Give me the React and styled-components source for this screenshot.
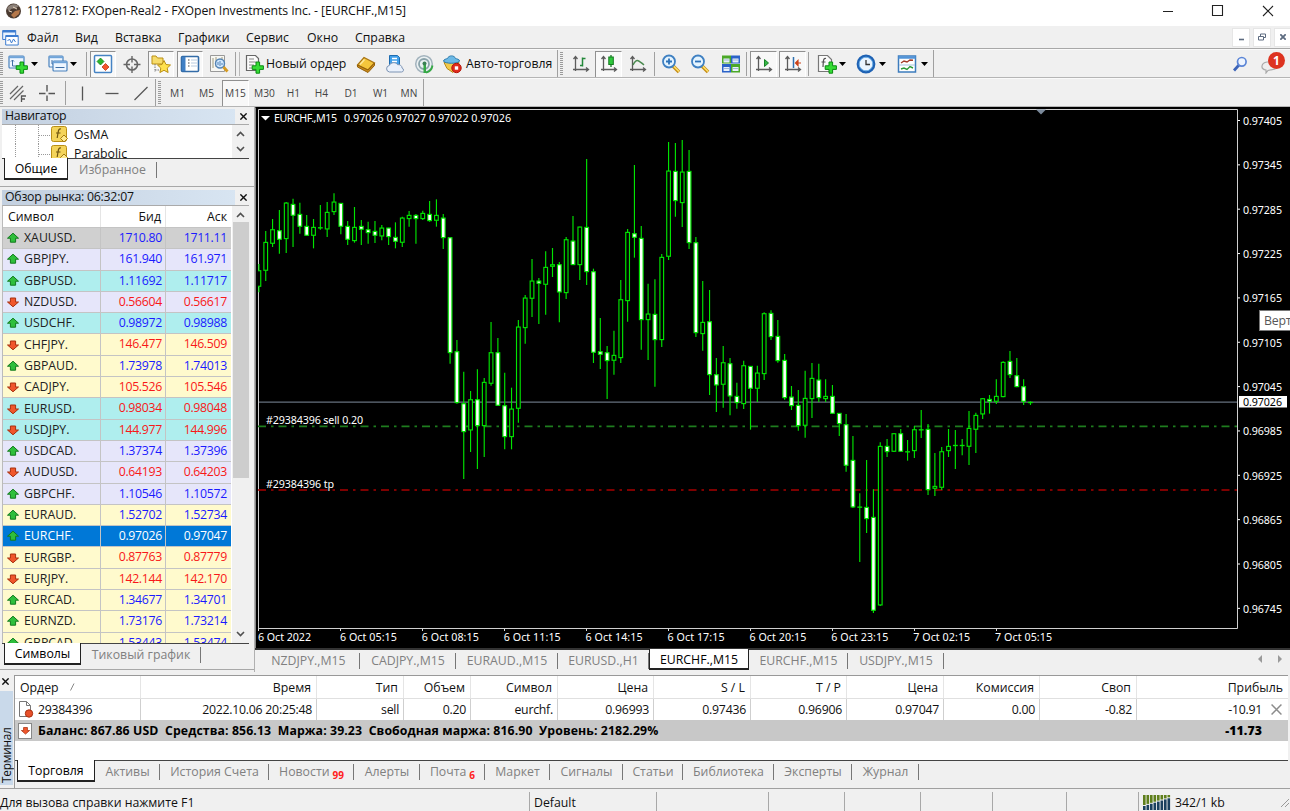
import styled, { createGlobalStyle, css } from "styled-components";

const GlobalStyle = createGlobalStyle`
    * {
        box-sizing: border-box;
    }
    body {
        margin: 0;
        overflow: hidden;
        background: #f0f0f0;
        font-family: "Open Sans", "Noto Sans", sans-serif;
        font-size: 12.3px;
        color: #111;
    }
    svg {
        display: block;
        flex: none;
    }
`;

/* ---------- data ---------- */

const MENU = [
    ["Файл", 48],
    ["Вид", 40],
    ["Вставка", 63],
    ["Графики", 68],
    ["Сервис", 61],
    ["Окно", 48],
    ["Справка", 60],
];

const COLORS = {
    grey: "#d0d0d0",
    lavender: "#e6e6fa",
    aqua: "#afeeee",
    cream: "#fffacd",
    selected: "#0078d7",
};

const SYMBOLS = [
    ["XAUUSD.", "1710.80", "1711.11", "up", "grey"],
    ["GBPJPY.", "161.940", "161.971", "up", "lavender"],
    ["GBPUSD.", "1.11692", "1.11717", "up", "aqua"],
    ["NZDUSD.", "0.56604", "0.56617", "down", "lavender"],
    ["USDCHF.", "0.98972", "0.98988", "up", "aqua"],
    ["CHFJPY.", "146.477", "146.509", "down", "cream"],
    ["GBPAUD.", "1.73978", "1.74013", "up", "cream"],
    ["CADJPY.", "105.526", "105.546", "down", "cream"],
    ["EURUSD.", "0.98034", "0.98048", "down", "aqua"],
    ["USDJPY.", "144.977", "144.996", "down", "aqua"],
    ["USDCAD.", "1.37374", "1.37396", "up", "lavender"],
    ["AUDUSD.", "0.64193", "0.64203", "down", "lavender"],
    ["GBPCHF.", "1.10546", "1.10572", "up", "lavender"],
    ["EURAUD.", "1.52702", "1.52734", "up", "cream"],
    ["EURCHF.", "0.97026", "0.97047", "up", "selected"],
    ["EURGBP.", "0.87763", "0.87779", "down", "cream"],
    ["EURJPY.", "142.144", "142.170", "down", "cream"],
    ["EURCAD.", "1.34677", "1.34701", "up", "cream"],
    ["EURNZD.", "1.73176", "1.73214", "up", "cream"],
    ["GBPCAD.", "1.53443", "1.53474", "up", "cream"],
];

const PRICES = [
    "0.97405", "0.97345", "0.97285", "0.97225", "0.97165", "0.97105",
    "0.97045", "0.96985", "0.96925", "0.96865", "0.96805", "0.96745",
];

const TIMES = [
    "6 Oct 2022", "6 Oct 05:15", "6 Oct 08:15", "6 Oct 11:15", "6 Oct 14:15",
    "6 Oct 17:15", "6 Oct 20:15", "6 Oct 23:15", "7 Oct 02:15", "7 Oct 05:15",
];

// high, body top, body bottom, low (thirds of a pixel under base), f = falling bar
const SEGMENTS = [
    {
        base: 105,
        bars: `477,496,545,562 378,411,497,528 342,373,416,426 315,376,404,446,f 291,293,402,444
            281,297,332,426,f 293,327,365,386,f 330,363,392,392,f 342,366,392,430 300,367,369,374
            291,321,373,396 265,290,321,330 294,294,365,388,f 348,363,404,420,f 306,366,408,413
            345,363,374,420,f 350,373,384,416,f 348,378,392,414,f 360,368,394,406 368,368,396,420,f
            352,396,410,430,f 335,338,413,426 318,330,342,365 327,330,342,416,f 317,324,342,345
            288,327,348,350,f 283,330,347,365 327,338,399,432,f 397,397,744,776,f 705,739,894,896,f
            800,895,981,1122,f 858,883,976,1041 793,883,963,1092,f 819,831,963,1056 651,742,836,842
            699,742,902,902,f`,
    },
    {
        base: 130,
        bars: `728,826,921,958,f 773,836,921,958 570,590,836,878 495,503,594,641 387,452,506,561
            444,452,461,582,f 364,411,464,554 354,403,410,441 396,403,487,577,f 321,328,489,507
            258,332,405,405,f 290,290,405,450 87,291,426,465,f 416,424,668,699,f 564,664,674,717,f
            648,667,693,807,f 602,675,692,734 450,508,684,699 297,306,513,575 105,310,323,383,f
            288,324,570,659,f 461,551,570,690 448,552,630,770,f 372,381,630,651 36,122,380,390
            39,123,213,260,f 30,125,219,291 60,123,339,357,f 321,337,609,621,f 453,576,612,662
            480,574,735,795,f 684,733,766,846,f 648,697,764,833 684,700,799,856,f 758,798,819,836,f`,
    },
    {
        base: 300,
        bars: `182,196,312,327 198,198,266,389,f 197,218,266,306 37,40,222,240 31,39,111,120,f
            60,108,183,188,f 162,180,294,299,f 258,290,318,330,f 270,315,378,392,f 212,294,377,413
            189,234,297,354 191,239,294,306,f 238,288,297,306 255,288,341,341,f 339,339,372,408,f
            342,373,497,515,f 408,480,622,624,f 580,620,622,786 480,621,657,699,f 568,651,932,939,f
            427,438,916,918 417,438,456,471,f 399,400,455,456 387,400,455,456,f 420,454,456,482
            378,388,453,474 330,388,391,414 372,387,570,585,f 459,558,566,588 441,454,563,570
            387,438,453,471 390,435,437,507 417,435,437,466 333,384,440,495 338,345,389,459
            294,295,343,357 285,297,305,341,f 238,288,305,312 184,186,291,292 153,183,225,234,f
            174,226,261,262,f 238,259,305,315,f 304,306,307,315`,
    },
];

const BARS = SEGMENTS.flatMap(({ base, bars }) =>
    bars.trim().split(/\s+/).map((bar) => {
        const [high, top, bottom, low, falling] = bar.split(",");
        const y = (value) => base + Number(value) / 3;
        return { high: y(high), top: y(top), bottom: y(bottom), low: y(low), falling };
    })
);

const CHART_TABS = [
    ["NZDJPY.,M15", 103],
    ["CADJPY.,M15", 96],
    ["EURAUD.,M15", 102],
    ["EURUSD.,H1", 91],
    ["EURCHF.,M15", 100, true],
    ["EURCHF.,M15", 99],
    ["USDJPY.,M15", 96],
];

const TERMINAL_TABS = [
    ["Торговля", 78, "", true],
    ["Активы", 65],
    ["История Счета", 109],
    ["Новости", 85, "99"],
    ["Алерты", 66],
    ["Почта", 65, "6"],
    ["Маркет", 65],
    ["Сигналы", 73],
    ["Статьи", 60],
    ["Библиотека", 91],
    ["Эксперты", 78],
    ["Журнал", 67],
];

// title, value, column width
const ORDER = [
    ["Ордер", "29384396", 126],
    ["Время", "2022.10.06 20:25:48", 176],
    ["Тип", "sell", 87],
    ["Объем", "0.20", 67],
    ["Символ", "eurchf.", 87],
    ["Цена", "0.96993", 96],
    ["S / L", "0.97436", 97],
    ["T / P", "0.96906", 96],
    ["Цена", "0.97047", 97],
    ["Комиссия", "0.00", 96],
    ["Своп", "-0.82", 97],
    ["Прибыль", "-10.91", 151],
];

/* ---------- icons ---------- */

const Icon = ({ size = 20, children }) => (
    <svg width={size} height={size} viewBox="0 0 20 20" fill="none">{children}</svg>
);

const Plus = ({ x = 9, y = 8 }) => (
    <path
        d={`M${x + 4} ${y}h3.6v3.8h3.8v3.6h-3.8v3.8h-3.6v-3.8h-3.8v-3.6h3.8z`}
        fill="#35dc35" stroke="#0b8a12" strokeWidth="1"
    />
);

const Axes = () => (
    <path
        d="M4.5 3v14M2 15.5h15M2.5 5l2-2.5 2 2.5M15 13.5l2.5 2-2.5 2"
        stroke="#5c5c5c" strokeWidth="1.3"
    />
);

const Window = ({ x = 2, y = 3, w = 15, h = 12 }) => (
    <>
        <rect x={x} y={y} width={w} height={h} rx="1" fill="#eef6ff" stroke="#4a82bd" strokeWidth="1.2" />
        <path d={`M${x} ${y + 1.2}h${w}`} stroke="#6fa4d9" strokeWidth="2" />
    </>
);

const Lens = ({ plus }) => (
    <Icon>
        <path d="M12 12l6 6" stroke="#c58d16" strokeWidth="3.6" />
        <path d="M12.5 12l5.5 5.5" stroke="#ffe169" strokeWidth="1.6" />
        <circle cx="8" cy="7.5" r="6" fill="#e4f4ff" stroke="#3f80c2" strokeWidth="1.8" />
        <path d={plus ? "M5 7.5h6M8 4.5v6" : "M5 7.5h6"} stroke="#2d72b8" strokeWidth="1.8" />
    </Icon>
);

const ICONS = {
    newChart: (
        <Icon>
            <Window x={1} y={2} />
            <path d="M4.5 6v6h6M3 7.5L4.5 6 6 7.500" stroke="#3f6fa5" />
            <Plus x={8} />
        </Icon>
    ),
    profiles: (
        <Icon>
            <Window x={1} y={2} w={14} h={11} />
            <path d="M4 6v4h8" stroke="#3f6fa5" />
            <Window x={5} y={7} w={14} h={10} />
            <path d="M7.5 13.5h9" stroke="#3f6fa5" />
        </Icon>
    ),
    market: (
        <Icon>
            <rect x="1.5" y="1.5" width="17" height="17" rx="1" fill="#fff" stroke="#4583c4" strokeWidth="1.5" />
            <path d="M7.5 4l3.5 3.5L7.5 11 4 7.5z" fill="#2db52d" stroke="#0b7d12" strokeWidth=".7" />
            <path d="M12.500 9.500L16 13l-3.5 3.500L9 13z" fill="#f3562a" stroke="#b12a08" strokeWidth=".7" />
        </Icon>
    ),
    target: (
        <Icon>
            <circle cx="10" cy="10.5" r="5.500" stroke="#666" strokeWidth="1.6" />
            <path d="M10 2v6.500M10 12.500V19M1.500 10.500H8M12 10.500h6.500" stroke="#666" strokeWidth="1.4" />
        </Icon>
    ),
    navigator: (
        <Icon>
            <path d="M1 2h4l1.500 2H12v6H1z" fill="#f7dc6b" stroke="#b98f15" />
            <path d="M4 10v8M4 16h5" stroke="#777" strokeDasharray="1.5 1" />
            <path d="M13 6.5l2 4 4.500.5-3.300 3.100.9 4.400-4.100-2.200-4.100 2.200.9-4.400-3.300-3.100 4.500-.5z" fill="#ffe14d" stroke="#b98f15" />
        </Icon>
    ),
    terminal: (
        <Icon>
            <rect x="1.5" y="2.5" width="17" height="15" rx="1" fill="#fff" stroke="#336ca8" strokeWidth="1.600" />
            <path d="M2 3h3.500v14H2z" fill="#3f7fc4" />
            <path d="M8 6h1.500M8 9h1.500M8 12h1.500" stroke="#444" strokeWidth="1.200" />
            <path d="M11 6h6M11 9h6M11 12h6" stroke="#b8cbe0" />
        </Icon>
    ),
    tester: (
        <Icon>
            <path d="M1.5 1.5h14v16h-14z" fill="#f7f7f3" stroke="#999" />
            <path d="M4 4v10M7 3v10M13 3v5" stroke="#a09c80" />
            <circle cx="11" cy="9.500" r="4.500" fill="#cfe7ff" stroke="#5484b4" strokeWidth="1.400" />
            <path d="M9 11V8M11 12V7M13 11V9" stroke="#5484b4" />
            <path d="M14.500 13l4 4.500" stroke="#d59a20" strokeWidth="2.800" />
        </Icon>
    ),
    order: (
        <Icon>
            <path d="M2.5 1.5h9l3 3v12h-12z" fill="#fafafa" stroke="#666" strokeWidth="1.2" />
            <path d="M5 5h5M5 8h7M5 11h5M5 14h3" stroke="#888" strokeWidth="1.2" />
            <Plus x={8} />
        </Icon>
    ),
    book: (
        <Icon>
            <path d="M1.5 11L8 3.500l10.500 5.500-6.500 7z" fill="#f5c63c" stroke="#a97412" strokeWidth="1.2" />
            <path d="M1.5 11v2L12 18.500l6.500-7V9L12 16z" fill="#c98a1c" stroke="#946108" />
            <path d="M4 10.500L8.500 5.500" stroke="#ffe99a" strokeWidth="1.5" />
        </Icon>
    ),
    cloud: (
        <Icon>
            <path d="M4.500 1.500h8l2 2v9h-10z" fill="#42a0ea" stroke="#1e6cb0" />
            <path d="M7 4.500h5M7 7.500h5" stroke="#fff" strokeWidth="1.5" />
            <path d="M4.5 18a3.300 3.300 0 01-.3-6.500 5 5 0 018.500-.8 3.600 3.600 0 014.400 3.400A2 2 0 0116.500 18z" fill="#eaf1fb" stroke="#7c93b3" />
        </Icon>
    ),
    signal: (
        <Icon>
            <circle cx="10" cy="10" r="8.300" fill="#eaf0f2" stroke="#a3b3bd" strokeWidth="1.500" />
            <circle cx="10" cy="10" r="5" stroke="#8ba3ab" strokeWidth="1.800" />
            <path d="M9.500 10h2.500v9H9.500z" fill="#35a945" />
            <circle cx="10.500" cy="9.500" r="2" fill="#3b7f54" />
            <path d="M12 18.500a8.500 8.500 0 006.500-7" stroke="#35a945" strokeWidth="1.800" />
        </Icon>
    ),
    auto: (
        <Icon>
            <path d="M2 8.500l3 6 6 4 5-5 1-5z" fill="#f3c94a" stroke="#b88915" />
            <path d="M1.500 7c0-1.500 3-2.200 4-2.500 1-3.500 7-3.500 8 0 1 .3 4.500 1 4 2.500-1 3-15 3-16 0z" fill="#6bb9e6" stroke="#2d7cae" />
            <circle cx="14.500" cy="14" r="4.700" fill="#e02b1d" stroke="#b31409" />
            <path d="M12.800 12.300h3.400v3.400h-3.400z" fill="#fff" />
        </Icon>
    ),
    bars: (
        <Icon><Axes /><path d="M11.500 3.500v9M11.500 4.500h3M9 11.500h2.500" stroke="#23883a" strokeWidth="1.5" /></Icon>
    ),
    candles: (
        <Icon>
            <Axes />
            <path d="M12 1v12" stroke="#157a20" strokeWidth="1.3" />
            <rect x="9.800" y="3" width="4.500" height="7.500" fill="#2fc93c" stroke="#157a20" />
        </Icon>
    ),
    line: (
        <Icon><Axes /><path d="M5 11c4-8 6-4 11 0" stroke="#4a8a4f" strokeWidth="1.5" /></Icon>
    ),
    zoomIn: <Lens plus />,
    zoomOut: <Lens />,
    tile: (
        <Icon>
            <path d="M1 1.500h9v8H1zM10 10h9v8.500h-9z" fill="#4ba827" />
            <path d="M10 1.500h9v8h-9zM1 10h9v8.500H1z" fill="#2b62c8" />
            <path d="M2.500 4.500h6v4h-6zM11.500 4.500h6v4h-6zM2.500 13h6v4h-6zM11.500 13h6v4h-6z" fill="#e8f1fb" />
            <path d="M3 6h5M12 6h5M3 14.500h5M12 14.500h5" stroke="#9eb7d6" />
        </Icon>
    ),
    scroll: (
        <Icon><Axes /><path d="M10.500 5.500l4 3.500-4 3.500z" fill="#35b845" stroke="#178226" /></Icon>
    ),
    shift: (
        <Icon>
            <Axes />
            <path d="M10.500 3v11" stroke="#3071b0" strokeWidth="1.500" />
            <path d="M18 9h-5M15 6.500L12.500 9l2.500 2.500z" stroke="#cb4319" fill="#cb4319" strokeWidth="1.200" />
        </Icon>
    ),
    indicators: (
        <Icon>
            <path d="M1.5 1.5h9l4 4v12h-13z" fill="#fafafa" stroke="#777" strokeWidth="1.2" />
            <path d="M9 4.500c-2-.5-2.500 1-2.700 3.500L6 13M4.500 8h4" stroke="#555" strokeWidth="1.2" />
            <Plus x={8} />
        </Icon>
    ),
    clock: (
        <Icon>
            <circle cx="10" cy="10" r="8" fill="#e9f4ff" stroke="#1e62b4" strokeWidth="2.800" />
            <circle cx="10" cy="10" r="6.800" stroke="#74b5ec" />
            <path d="M10 6v4.500h4" stroke="#333" strokeWidth="1.300" />
        </Icon>
    ),
    template: (
        <Icon>
            <rect x="1.5" y="2" width="17" height="16" fill="#fff" stroke="#3d7cbd" strokeWidth="1.5" />
            <path d="M1.500 3.500h17" stroke="#5294d8" strokeWidth="2.500" />
            <path d="M2 11h16" stroke="#a8c4df" />
            <path d="M4 9l3-2 3 1 3-2 3 .3" stroke="#a33b27" strokeWidth="1.400" />
            <path d="M4 15l3-1 3 1.500 3-3 3 1.500" stroke="#2d9a3a" strokeWidth="1.400" />
        </Icon>
    ),
    channel: (
        <Icon>
            <path d="M2 11l8-8M2 16L15 3M6 17l9.500-9.500" stroke="#666" strokeWidth="1.200" />
            <path d="M13.500 19v-6H18M13.500 16h3.500" stroke="#555" strokeWidth="1.300" />
        </Icon>
    ),
    cross: (
        <Icon><path d="M10 2v6.500M10 12.500V18M2 10.500h6.500M11.500 10.500H18" stroke="#555" strokeWidth="1.400" /></Icon>
    ),
    vline: (
        <Icon><path d="M10.500 3.500v14" stroke="#555" strokeWidth="1.300" /></Icon>
    ),
    hline: (
        <Icon><path d="M3.500 10.500h13" stroke="#555" strokeWidth="1.300" /></Icon>
    ),
    trend: (
        <Icon><path d="M3.500 17L16.500 4" stroke="#555" strokeWidth="1.300" /></Icon>
    ),
};

const Caret = () => (
    <svg width="7" height="4" viewBox="0 0 7 4"><path d="M0 0h7L3.500 4z" fill="#000" /></svg>
);

const Cross = ({ size = 7, color = "#111", width = 1.4 }) => (
    <svg width={size} height={size} viewBox="0 0 10 10">
        <path d="M.5.500l9 9M9.500.500l-9 9" stroke={color} strokeWidth={width * 10 / size} />
    </svg>
);

const Chevron = ({ down }) => (
    <svg width="9" height="6" viewBox="0 0 9 6" fill="none">
        <path d={down ? "M1 1l3.500 3.500L8 1" : "M1 5l3.500-3.500L8 5"} stroke="#505050" strokeWidth="1.600" />
    </svg>
);

const Arrow = ({ dir, size = 12 }) => (
    <svg width={size} height={size} viewBox="0 0 12 12">
        <path
            d={dir === "up" ? "M6 1.200l5.500 5H8.600v4H3.400v-4H.5z" : "M6 10.800L.5 6h2.900V2h5.200v4h2.900z"}
            fill={dir === "up" ? "#2fbf3c" : "#f0562c"}
            stroke={dir === "up" ? "#127a1d" : "#a8300f"}
            strokeWidth="1"
        />
    </svg>
);

/* ---------- toolbars ---------- */

// kinds: grip, sep, end, gap, or an icon name with its slot width
const MAIN_BAR = [
    ["grip", 6], ["newChart", 24], ["caret", 8], ["gap", 10], ["profiles", 20], ["caret", 11], ["gap", 7], ["sep", 4],
    ["market", 26, "on"], ["target", 32], ["navigator", 26, "on"], ["gap", 3], ["terminal", 26, "on"], ["tester", 32],
    ["sep", 5], ["gap", 2], ["order", 24], ["text", 87, "Новый ордер"], ["book", 26], ["cloud", 31], ["signal", 28],
    ["auto", 28], ["text", 91, "Авто-торговля"], ["end", 3], ["grip", 6], ["bars", 29], ["candles", 27, "on"],
    ["line", 32], ["sep", 2], ["zoomIn", 29], ["zoomOut", 30], ["tile", 31], ["sep", 4], ["scroll", 27, "on"],
    ["gap", 2], ["shift", 27, "on"], ["gap", 2], ["sep", 4], ["gap", 3], ["indicators", 23], ["caret", 8],
    ["gap", 8], ["clock", 24], ["caret", 8], ["gap", 8], ["template", 26], ["caret", 8], ["gap", 5], ["end", 2],
];

const DRAW_BAR = [
    ["grip", 4], ["channel", 28], ["cross", 30], ["gap", 3], ["sep", 2], ["vline", 30], ["hline", 30], ["trend", 28],
    ["end", 3], ["grip", 6], ["period", 27, "M1"], ["period", 31, "M5"], ["period", 27, "M15", true],
    ["period", 31, "M30"], ["period", 27, "H1"], ["period", 29, "H4"], ["period", 30, "D1"],
    ["period", 29, "W1"], ["period", 28, "MN"], ["end", 3],
];

function ToolbarItem({ item }) {
    const [kind, width, extra, active] = item;
    switch (kind) {
        case "grip":
            return <Grip $w={width} />;
        case "sep":
        case "end":
            return <Separator $w={width} $tall={kind === "end"} />;
        case "text":
            return <Slot $w={width} $left>{extra}</Slot>;
        case "period":
            return <Period $w={width} $on={active}>{extra}</Period>;
        case "caret":
            return <Slot $w={width}><Caret /></Slot>;
        case "gap":
            return <Slot $w={width} />;
        default:
            return <Slot $w={width} $on={extra === "on"}>{ICONS[kind]}</Slot>;
    }
}

/* ---------- chart ---------- */

function Chart() {
    return (
        <ChartSvg width="1035" height="541" viewBox="255 107 1035 541">
            <rect x="255" y="107" width="1035" height="541" fill="#000" />
            <path d="M255.500 648V107.500" stroke="#8a8a8a" />
            <path d="M258.500 628V109.500H1237.500V628.500H258" stroke="#d0d0d0" fill="none" />
            <path d="M259 402.200h978" stroke="#66707e" strokeWidth="1.200" />
            <path d="M258 426.300h979" stroke="#1e7d1e" strokeWidth="1.700" strokeDasharray="8 5 2.500 5" />
            <path d="M258 490h979" stroke="#a80000" strokeWidth="1.700" strokeDasharray="8 5 2.500 5" />
            <svg x="258" y="110" width="979" height="518" viewBox="258 110 979 518">
                {BARS.map((bar, i) => {
                    const x = 258.9 + i * 6.828;
                    return (
                        <g key={i} stroke="#00e400" strokeWidth="1.150">
                            <path d={`M${x} ${bar.high}V${bar.low}`} />
                            <rect
                                x={x - 1.85} y={bar.top + 0.4} width="3.7"
                                height={Math.max(bar.bottom - bar.top - 0.8, 0.2)}
                                fill={bar.falling ? "#fff" : "#000"}
                            />
                        </g>
                    );
                })}
            </svg>
            <path d="M261 116h9l-4.500 4.500z" fill="#fff" />
            <path d="M1036 109.500h10l-5 5z" fill="#7b8a9b" />
            <ChartText x="274" y="122" textLength="63">EURCHF.,M15</ChartText>
            <ChartText x="344" y="122" textLength="167">0.97026 0.97027 0.97022 0.97026</ChartText>
            <ChartText x="266" y="424" textLength="97">#29384396 sell 0.20</ChartText>
            <ChartText x="266" y="488" textLength="68">#29384396 tp</ChartText>
            {PRICES.map((price, i) => (
                <g key={price}>
                    <path d={`M1238 ${120.5 + i * 44.35}h2`} stroke="#fff" />
                    <ChartText x="1243" y={125 + i * 44.35} textLength="39">{price}</ChartText>
                </g>
            ))}
            {TIMES.map((time, i) => (
                <g key={time}>
                    <path d={`M${258.5 + i * 82} 629v2`} stroke="#ddd" />
                    <ChartText x={258 + i * 81.9} y="641" textLength={i ? 57 : 53}>{time}</ChartText>
                </g>
            ))}
            <rect x="1239" y="396" width="48" height="11.500" fill="#fff" />
            <ChartText x="1243" y="406" textLength="39" $dark>0.97026</ChartText>
        </ChartSvg>
    );
}

/* ---------- panels ---------- */

function Navigator() {
    return (
        <Panel $h={80}>
            <PanelTitle>Навигатор<CloseBox><Cross /></CloseBox></PanelTitle>
            <Tree>
                <div>
                    {["OsMA", "Parabolic"].map((name) => (
                        <TreeRow key={name}>
                            <svg width="70" height="19" viewBox="0 0 70 19">
                                <path d="M13.5 0v19M36.500 0v19M37 10.500h12" stroke="#999" strokeDasharray="1 1" />
                                <rect x="49.500" y="1.500" width="15" height="15" rx="2" fill="#f4d45a" stroke="#b98f15" />
                                <path d="M59 4c-2-.5-2.500 1-3 4l-.8 5M54 8h4.500" stroke="#705510" strokeWidth="1.200" fill="none" />
                                <path d="M62 10l3.500 3.500L62 17l-3.500-3.500z" fill="#ffe98b" stroke="#a57c10" />
                            </svg>
                            {name}
                        </TreeRow>
                    ))}
                </div>
                <ScrollTrack><Chevron /><Chevron down /></ScrollTrack>
            </Tree>
            <Tabs $pad={2}>
                <Tab $w={64} $active>Общие</Tab>
                <Tab $w={89}>Избранное</Tab>
            </Tabs>
        </Panel>
    );
}

function MarketWatch() {
    return (
        <Panel $h={482}>
            <PanelTitle>Обзор рынка: 06:32:07<CloseBox><Cross /></CloseBox></PanelTitle>
            <Quotes>
                <QuoteTable>
                    <QuoteHead><span>Символ</span><span>Бид</span><span>Аск</span></QuoteHead>
                    {SYMBOLS.map(([name, bid, ask, dir, color]) => (
                        <QuoteRow key={name} $bg={COLORS[color]} $dir={dir} $selected={color === "selected"}>
                            <span><Arrow dir={dir} />{name}</span>
                            <span>{bid}</span>
                            <span>{ask}</span>
                        </QuoteRow>
                    ))}
                </QuoteTable>
                <ScrollTrack>
                    <Chevron />
                    <Thumb />
                    <Chevron down />
                </ScrollTrack>
            </Quotes>
            <Tabs $pad={2}>
                <Tab $w={77} $active>Символы</Tab>
                <Tab $w={120}>Тиковый график</Tab>
            </Tabs>
        </Panel>
    );
}

function Terminal() {
    return (
        <TerminalBox>
            <Side>
                <Cross />
                <SideLabel>Терминал</SideLabel>
            </Side>
            <TerminalBody>
                <OrderRow $h={23} $head>
                    {ORDER.map(([title, , width], i) => (
                        <Cell key={i} $w={width} $head>
                            {title}
                            {i === 0 && <svg width="5" height="8" viewBox="0 0 5 8"><path d="M.5 7.500L4 .5" stroke="#888" /></svg>}
                        </Cell>
                    ))}
                </OrderRow>
                <OrderRow $h={21}>
                    {ORDER.map(([, value, width], i) => (
                        <Cell key={i} $w={width}>
                            {i === 0 && (
                                <svg width="17" height="17" viewBox="0 0 17 17">
                                    <path d="M2.500.500h7l4 4v11h-11z" fill="#fff" stroke="#777" />
                                    <path d="M9.500.500v4h4" fill="none" stroke="#777" />
                                    <circle cx="12" cy="12.500" r="3.700" fill="#e8502a" stroke="#a8300f" />
                                </svg>
                            )}
                            {value}
                            {i === ORDER.length - 1 && <Cross size={11} color="#8c8c8c" width={1.5} />}
                        </Cell>
                    ))}
                </OrderRow>
                <Balance>
                    <BalanceIcon><Arrow dir="down" size={9} /></BalanceIcon>
                    <span>Баланс: 867.86 USD&nbsp; Средства: 856.13&nbsp; Маржа: 39.23&nbsp; Свободная маржа: 816.90&nbsp; Уровень: 2182.29%</span>
                    <b>-11.73</b>
                </Balance>
                <Blank />
                <Tabs $pad={2}>
                    {TERMINAL_TABS.map(([name, width, count, active]) => (
                        <Tab key={name} $w={width} $active={active}>{name}{count && <sub>{count}</sub>}</Tab>
                    ))}
                </Tabs>
            </TerminalBody>
        </TerminalBox>
    );
}

export default function App() {
    return (
        <Screen>
            <GlobalStyle />
            <TitleBar>
                <svg width="17" height="17" viewBox="0 0 17 17">
                    <circle cx="8.500" cy="8" r="7.500" fill="#4a3a30" />
                    <path d="M2 5c3-4 8-5 12-2l-3 2-5 1-2 3z" fill="#8b8078" />
                    <path d="M6 12l4-4 5-1-1 4-5 4z" fill="#b5784a" />
                    <path d="M8 4l4 2M4 8l3 1" stroke="#e7d3bd" />
                </svg>
                <Title>1127812: FXOpen-Real2 - FXOpen Investments Inc. - [EURCHF.,M15]</Title>
                <svg width="114" height="12" viewBox="0 0 114 12" fill="none" stroke="#222" strokeWidth="1.100">
                    <path d="M1 6.500h10M101 1l10 10M111 1l-10 10" />
                    <path d="M50.500.500h10v10h-10z" />
                </svg>
            </TitleBar>
            <MenuBar>
                <svg width="17" height="17" viewBox="0 0 17 17" fill="none">
                    <path d="M.7 1.500h13v9H.7z" fill="#e9f3ff" stroke="#3d7cd0" />
                    <path d="M.7 2.500h13" stroke="#3d7cd0" strokeWidth="2" />
                    <path d="M3.700 6.500h12.500v9.500H3.700z" fill="#fff" stroke="#3d7cd0" />
                    <path d="M4 7.500h12M5.500 12l2-2 2 4 2-4 2 3" stroke="#3d7cd0" />
                </svg>
                <MenuItems>
                    {MENU.map(([name, width]) => <MenuItem key={name} $w={width}>{name}</MenuItem>)}
                </MenuItems>
                <MdiButton>
                    <svg width="7" height="8" viewBox="0 0 7 8"><path d="M1 6.500h5" stroke="#5d6b80" strokeWidth="1.600" /></svg>
                </MdiButton>
                <MdiButton>
                    <svg width="8" height="8" viewBox="0 0 8 8" fill="none" stroke="#5d6b80">
                        <path d="M2.500 3V1h5v3.500h-2M.5 3.500h5V7h-5z" />
                    </svg>
                </MdiButton>
                <MdiButton><Cross size={6} color="#5d6b80" width={1.8} /></MdiButton>
            </MenuBar>
            <Toolbar>
                {MAIN_BAR.map((item, i) => <ToolbarItem key={i} item={item} />)}
                <Spacer />
                <svg width="16" height="16" viewBox="0 0 16 16" fill="none">
                    <path d="M7 9l-5 5.500" stroke="#3c63b8" strokeWidth="2.800" />
                    <circle cx="9.800" cy="5.800" r="4.300" fill="#eef5ff" stroke="#5b85d6" strokeWidth="1.700" />
                </svg>
                <Chat>
                    <svg width="16" height="14" viewBox="0 0 16 14">
                        <path d="M6 2h8v7l-7 1.500L5 13V10C-1 9 0 3 6 2z" fill="#eee" stroke="#aaa" strokeWidth="1.200" />
                    </svg>
                    <Badge>1</Badge>
                </Chat>
            </Toolbar>
            <Toolbar>
                {DRAW_BAR.map((item, i) => <ToolbarItem key={i} item={item} />)}
            </Toolbar>
            <Main>
                <Left>
                    <Navigator />
                    <MarketWatch />
                </Left>
                <Right>
                    <Chart />
                    <ChartTabs $pad={2}>
                        {CHART_TABS.map(([name, width, active], i) => (
                            <Tab key={i} $w={width} $active={active}>{name}</Tab>
                        ))}
                        <Spacer />
                        <svg width="26" height="8" viewBox="0 0 26 8">
                            <path d="M4 0v8L0 4zM20 0v8l4-4z" fill="#9a9a9a" />
                        </svg>
                    </ChartTabs>
                    <Tooltip>Верт</Tooltip>
                </Right>
            </Main>
            <Terminal />
            <StatusBar>
                <StatusCell $w={530}>Для вызова справки нажмите F1</StatusCell>
                <StatusCell $w={127}>Default</StatusCell>
                <StatusCell $w={112} />
                <StatusCell $w={76} />
                <StatusCell $w={76} />
                <StatusCell $w={72} />
                <StatusCell $w={74} />
                <StatusCell $w={72} />
                <StatusCell $w={151} $last>
                    <svg width="28" height="15" viewBox="0 0 28 15">
                        {[0, 1, 2, 3, 4, 5, 6, 7].map((i) => (
                            <g key={i}>
                                <rect x={i * 3.5} y="0" width="2.600" height={10 - i * 1.1} fill="#5f7f1c" />
                                <rect x={i * 3.5} y={11 - i * 1.1} width="2.600" height={4 + i * 1.1} fill="#1b405f" />
                            </g>
                        ))}
                    </svg>
                    342/1 kb
                    <Spacer />
                    <svg width="8" height="9" viewBox="0 0 8 9"><path d="M0 9l8-8M4 9l4-4" stroke="#999" /></svg>
                </StatusCell>
            </StatusBar>
        </Screen>
    );
}

/* ---------- styles ---------- */

const Screen = styled.div`
    width: 1290px;
    height: 811px;
    overflow: hidden;
    display: flex;
    flex-direction: column;
    white-space: nowrap;
`;

const Spacer = styled.div`
    flex: 1;
`;

const TitleBar = styled.div`
    height: 26px;
    flex: none;
    display: flex;
    align-items: flex-start;
    padding: 3px 14px 0 5px;
    background: #fff;

    > svg:last-child {
        margin-top: 2px;
    }
`;

const Title = styled.div`
    flex: 1;
    padding-left: 5px;
    line-height: 16px;
    letter-spacing: -0.09px;
`;

const MenuBar = styled.div`
    height: 23px;
    flex: none;
    display: flex;
    align-items: center;
    padding-left: 2px;
    border-bottom: 1px solid #a8a8a8;
    background: #f0f0f0;
`;

const MenuItems = styled.div`
    flex: 1;
    display: flex;
    padding-left: 8px;
`;

const MenuItem = styled.div`
    width: ${(props) => props.$w}px;
`;

const MdiButton = styled.div`
    width: 18px;
    height: 19px;
    margin-left: 3px;
    display: flex;
    flex: none;
    align-items: center;
    justify-content: center;
    background: #fff;
    border: 1px solid #e6e6e6;

    &:last-child {
        margin-right: -2px;
    }
`;

const Toolbar = styled.div`
    height: 29px;
    flex: none;
    display: flex;
    align-items: center;
    border-top: 1px solid #fafafa;
    border-bottom: 1px solid #b5b5b5;
    background: #f0f0f0;
`;

const pressed = css`
    background: #f8f8f8;
    border-left: 1px solid #909090;
    border-top: 1px solid #909090;
    border-right: 1px solid #fff;
`;

const Slot = styled.div`
    width: ${(props) => props.$w}px;
    height: 26px;
    flex: none;
    display: flex;
    align-items: center;
    justify-content: ${(props) => (props.$left ? "flex-start" : "center")};
    ${(props) => props.$on && pressed}
`;

const Period = styled(Slot)`
    font-size: 10.2px;
    font-weight: 500;
    color: #444;
`;

const Grip = styled.div`
    width: 3px;
    height: 24px;
    flex: none;
    margin-right: ${(props) => props.$w - 3}px;
    background: repeating-linear-gradient(#9b9b9b 0 1px, #f0f0f0 1px 2px);
`;

const Separator = styled.div`
    width: ${(props) => props.$w}px;
    height: ${(props) => (props.$tall ? 27 : 24)}px;
    flex: none;
    border-left: 1px solid #a0a0a0;
    ${(props) => props.$w > 4 && "border-right: 1px solid #b8b8b8;"}
`;

const Chat = styled.div`
    position: relative;
    width: 29px;
    margin-left: 13px;
    padding-top: 6px;
`;

const Badge = styled.div`
    position: absolute;
    top: -2px;
    left: 7px;
    width: 17px;
    height: 17px;
    border-radius: 50%;
    background: #dd3320;
    color: #fff;
    font-weight: 700;
    font-size: 12px;
    line-height: 17px;
    text-align: center;
`;

const Main = styled.div`
    height: 565px;
    flex: none;
    display: flex;
`;

const Left = styled.div`
    width: 255px;
    flex: none;
    display: flex;
    flex-direction: column;
    border-right: 1px solid #b0b0b0;
`;

const Panel = styled.div`
    height: ${(props) => props.$h}px;
    flex: none;
    display: flex;
    flex-direction: column;
    padding: 2px 5px 5px 2px;
    border-bottom: 1px solid #a8a8a8;
    margin-bottom: 1px;
`;

const PanelTitle = styled.div`
    height: 15px;
    flex: none;
    display: flex;
    justify-content: space-between;
    padding-left: 3px;
    line-height: 14px;
    letter-spacing: -0.25px;
    background: linear-gradient(90deg, #c3d0e0, #d9e6f3);
`;

const CloseBox = styled.div`
    width: 14px;
    display: flex;
    align-items: center;
    justify-content: flex-end;
    padding-right: 2px;
    background: #f0f0f0;
`;

const Tree = styled.div`
    height: 34px;
    flex: none;
    display: flex;
    justify-content: space-between;
    overflow: hidden;
    background: #fff;
    border-top: 1px solid #aaa;
`;

const TreeRow = styled.div`
    height: 19px;
    display: flex;
    align-items: center;
    gap: 2px;
    line-height: 20px;
`;

const ScrollTrack = styled.div`
    width: 17px;
    flex: none;
    padding: 6px 0;
    display: flex;
    flex-direction: column;
    align-items: center;
    justify-content: space-between;
    background: #f0f0f0;
`;

const Thumb = styled.div`
    width: 16px;
    height: 256px;
    margin: 4px 0 auto;
    background: #cdcdcd;
`;

const Tabs = styled.div`
    height: 22px;
    flex: none;
    display: flex;
    padding-left: ${(props) => props.$pad}px;
    background: #f0f0f0;
    border-top: 1px solid #444;
`;

const Tab = styled.div`
    width: ${(props) => props.$w}px;
    height: 22px;
    flex: none;
    position: relative;
    text-align: center;
    line-height: 22px;
    color: #808080;

    &::after {
        content: "";
        position: absolute;
        right: 0;
        top: 3px;
        height: 16px;
        border-right: 1px solid #777;
    }

    sub {
        margin-left: 3px;
        font-size: 10px;
        font-weight: 700;
        line-height: 0;
        color: #f22;
    }

    ${(props) =>
        props.$active &&
        css`
            margin-top: -1px;
            background: #fff;
            color: #000;
            border: 1px solid #222;
            border-top: 0;
            border-bottom-width: 2px;

            &::after {
                display: none;
            }
        `}
`;

const Quotes = styled.div`
    height: 438px;
    flex: none;
    display: flex;
    overflow: hidden;
    background: #fff;
    border-top: 1px solid #aaa;
    border-left: 1px solid #bbb;
`;

const QuoteTable = styled.div`
    width: 229px;
    flex: none;
`;

const QuoteHead = styled.div`
    height: 21px;
    display: grid;
    grid-template-columns: 98px 65px 65px;
    line-height: 21px;

    span {
        text-align: right;
        padding-right: 4px;
        border-right: 1px solid #e5e5e5;
    }
    span:first-child {
        text-align: left;
        padding-left: 5px;
    }
    span:last-child {
        border: 0;
    }
`;

const QuoteRow = styled.div`
    height: 21.3px;
    width: 228px;
    display: grid;
    grid-template-columns: 98px 65px 65px;
    line-height: 20px;
    background: ${(props) => props.$bg};
    border-top: 1px solid #c4c4c4;

    span {
        text-align: right;
        padding-right: 3px;
        border-right: 1px solid #c4c4c4;
        letter-spacing: -0.3px;
        color: ${(props) => (props.$selected ? "#fff" : props.$dir === "up" ? "#1a1aff" : "#f81818")};
    }
    span:first-child {
        display: flex;
        align-items: center;
        gap: 5px;
        padding-left: 4px;
        letter-spacing: 0;
        color: ${(props) => (props.$selected ? "#fff" : "#222")};
    }
    span:last-child {
        padding-right: 4px;
        border: 0;
    }
`;

const Right = styled.div`
    position: relative;
    width: 1035px;
`;

const ChartSvg = styled.svg`
    display: block;
`;

const ChartText = styled.text`
    font-family: "Noto Sans", "Open Sans", sans-serif;
    font-size: 10.7px;
    fill: ${(props) => (props.$dark ? "#000" : "#fff")};
`;

const ChartTabs = styled(Tabs)`
    height: 24px;
    padding-right: 6px;
    border-top: 2px solid #333;

    > svg {
        margin-top: 5px;
    }
    ${Tab} {
        height: 21px;
        line-height: 22px;
    }
`;

const Tooltip = styled.div`
    position: absolute;
    left: 1004px;
    top: 203px;
    width: 40px;
    height: 21px;
    padding-left: 4px;
    line-height: 19px;
    letter-spacing: -0.2px;
    color: #575757;
    background: #fff;
    border: 1px solid #777;
`;

const TerminalBox = styled.div`
    height: 117px;
    flex: none;
    display: flex;
    padding: 3px 2px 0 0;
    border-bottom: 1px solid #a0a0a0;
`;

const Side = styled.div`
    width: 15px;
    padding: 3px 0 3px 2px;
    display: flex;
    flex-direction: column;
    gap: 6px;
`;

const SideLabel = styled.div`
    flex: 1;
    margin-left: -2px;
    width: 13px;
    writing-mode: vertical-rl;
    transform: rotate(180deg);
    line-height: 13px;
    font-size: 11.8px;
    letter-spacing: -0.2px;
    padding-top: 2px;
    background: #c9d9ea;
`;

const TerminalBody = styled.div`
    flex: 1;
    background: #f0f0f0;
    border-left: 1px solid #999;
    border-top: 1px solid #999;
`;

const OrderRow = styled.div`
    height: ${(props) => props.$h}px;
    display: flex;
    background: #fff;
    ${(props) => props.$head && "border-bottom: 1px solid #e0e0e0;"}
`;

const Cell = styled.div`
    width: ${(props) => props.$w}px;
    flex: none;
    display: flex;
    align-items: center;
    justify-content: flex-end;
    gap: 9px;
    padding-right: ${(props) => (props.$head ? 5 : 4)}px;
    letter-spacing: ${(props) => (props.$head ? 0 : "-0.25px")};
    border-right: 1px solid ${(props) => (props.$head ? "#e5e5e5" : "#cfcfcf")};

    &:first-child {
        justify-content: flex-start;
        padding-left: ${(props) => (props.$head ? 5 : 2)}px;
        gap: ${(props) => (props.$head ? 11 : 4)}px;
    }
    &:last-child {
        border: 0;
        padding-right: ${(props) => (props.$head ? 5 : 6)}px;
    }
`;

const Balance = styled.div`
    height: 21px;
    display: flex;
    align-items: center;
    padding: 0 26px 0 3px;
    font-weight: 700;
    letter-spacing: 0.09px;
    color: #000;
    background: #c8c8c8;

    span {
        flex: 1;
        padding-left: 6px;
    }
`;

const BalanceIcon = styled.div`
    width: 14px;
    height: 16px;
    display: flex;
    align-items: center;
    justify-content: center;
    background: #fff;
    border: 1px solid #888;
`;

const Blank = styled.div`
    height: 19px;
    background: #fff;
`;

const StatusBar = styled.div`
    height: 22px;
    flex: none;
    display: flex;
    padding-top: 3px;
`;

const StatusCell = styled.div`
    width: ${(props) => props.$w}px;
    flex: none;
    display: flex;
    align-items: center;
    gap: 4px;
    padding: 2px 0 0 4px;
    border-right: 1px solid ${(props) => (props.$last ? "transparent" : "#a8a8a8")};

    &:first-child {
        padding-left: 0;
    }
`;
